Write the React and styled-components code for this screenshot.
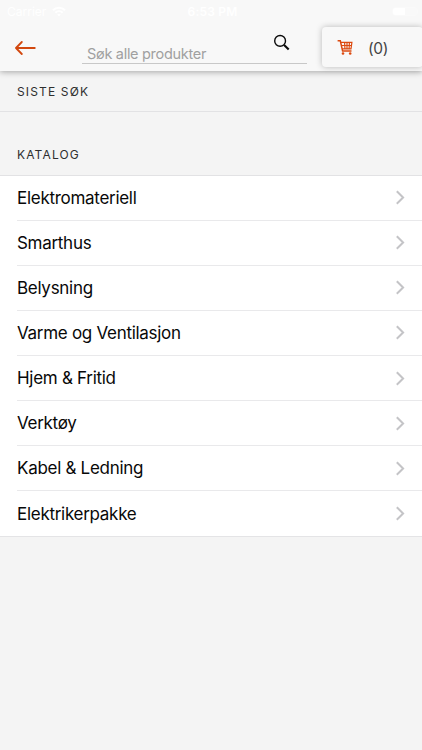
import React from 'react'
import styled, { createGlobalStyle } from 'styled-components';


const categories = [
  'Elektromateriell',
  'Smarthus',
  'Belysning',
  'Varme og Ventilasjon',
  'Hjem & Fritid',
  'Verktøy',
  'Kabel & Ledning',
  'Elektrikerpakke',
]


const App = () => {

  return (
    <>
    <GlobalStyle />
    <PageWrapper>
      <Header>
        <StatusBar>
          <Carrier>
            Carrier
            <svg width="14" height="11" viewBox="0 0 14 11" fill="none" stroke="#fff" strokeWidth="2">
              <path d="M1 4.2a8.6 8.6 0 0 1 12 0M3.3 6.8a5.3 5.3 0 0 1 7.4 0" />
              <path d="M5.2 8.6a2.6 2.6 0 0 1 3.6 0L7 10.4z" fill="#fff" stroke="none" />
            </svg>
          </Carrier>
          <Clock>6:53 PM</Clock>
          <BatteryWrapper>
            <Battery />
          </BatteryWrapper>
        </StatusBar>

        <Toolbar>
          <BackButton aria-label="Tilbake">
            <svg width="22" height="14" viewBox="0 0 22 14" fill="none" stroke="#d2480f" strokeWidth="1.8" strokeLinecap="round" strokeLinejoin="round">
              <path d="M6.8 1L1 7l5.8 6M1.2 7H19.8" />
            </svg>
          </BackButton>

          <SearchBox>
            <SearchInput placeholder="Søk alle produkter" />
            <svg width="17" height="17" viewBox="0 0 17 17" fill="none" stroke="#0a0a0a">
              <circle cx="6.1" cy="6.9" r="5.4" strokeWidth="1.4" />
              <path d="M10.1 10.9L14.7 15.4" strokeWidth="2.1" />
            </svg>
          </SearchBox>

          <CartButton>
            <svg width="17" height="16" viewBox="0 0 17 16" fill="none" stroke="#dc4a10">
              <path d="M0.6 1.8h2.7l2.3 10.1h8.9" strokeWidth="1.5" />
              <path d="M3.6 3.4h11.3l-0.9 6.4H5.1M4.4 6.5h10.1M7.6 3.5l0.3 6M10 3.5v6M12.4 3.5l-0.3 6" strokeWidth="1.2" />
              <circle cx="6" cy="14.5" r="1.3" fill="#dc4a10" stroke="none" />
              <circle cx="13.2" cy="14.5" r="1.3" fill="#dc4a10" stroke="none" />
            </svg>
            <span>(0)</span>
          </CartButton>
        </Toolbar>
      </Header>

      <SectionTitle $height="41px" $bottom="12px">SISTE SØK</SectionTitle>
      <SectionTitle $height="63.5px" $bottom="13px">KATALOG</SectionTitle>

      <CategoryList>
        {
          categories.map((name)=>(
            <CategoryRow key={name}>
              <span>{name}</span>
              <svg width="9" height="15" viewBox="0 0 9 15" fill="none" stroke="#c4c4c7" strokeWidth="2">
                <path d="M0.8 1.2l6.3 6.3-6.3 6.3" />
              </svg>
            </CategoryRow>
          ))
        }
      </CategoryList>
    </PageWrapper>
    </>
  )
}


const GlobalStyle = createGlobalStyle`
  * {
    box-sizing: border-box;
  }

  body {
    margin: 0;
    background-color: #f4f4f4;
    font-family: Inter, sans-serif;
  }
`

const PageWrapper = styled.div`
  width: 100%;
  height: 750px;
  overflow: hidden;
  background-color: #f4f4f4;
`

const Header = styled.header`
  position: relative;
  height: 71px;
  background-color: #f8f8f8;
  box-shadow: 0 1px 6px rgba(0, 0, 0, 0.33);
`

const StatusBar = styled.div`
  display: grid;
  grid-template-columns: 1fr auto 1fr;
  align-items: center;
  height: 22px;
  padding: 0 4px 0 7px;
  color: #fff;
  font-size: 12px;
`

const Carrier = styled.div`
  display: flex;
  align-items: center;
  gap: 6px;
`

const Clock = styled.div`
  font-weight: 600;
  letter-spacing: 0.2px;
`

const BatteryWrapper = styled.div`
  display: flex;
  justify-content: flex-end;
`

const Battery = styled.div`
  width: 26px;
  height: 9px;
  border: 1px solid #fafafa;
  border-radius: 3px;
  background: linear-gradient(to right, #fff 50%, #f9f9f9 50%);
`

const Toolbar = styled.div`
  display: flex;
  align-items: flex-start;
  padding-top: 5px;
`

const BackButton = styled.button`
  display: flex;
  align-items: center;
  flex-shrink: 0;
  width: 82px;
  height: 41px;
  padding: 0 0 0 15px;
  border: none;
  background: none;
`

const SearchBox = styled.div`
  display: flex;
  flex-shrink: 0;
  width: 225px;
  height: 37px;
  padding: 7px 16px 0 5px;
  border-bottom: 1px solid #c8c8c8;
`

const SearchInput = styled.input`
  flex: 1;
  min-width: 0;
  height: 22px;
  margin-top: 8px;
  padding: 0;
  border: none;
  outline: none;
  background: none;
  font-family: inherit;
  font-size: 14.5px;
  letter-spacing: -0.3px;

  &::placeholder {
    color: #a0a0a0;
    opacity: 1;
  }
`

const CartButton = styled.div`
  display: flex;
  align-items: center;
  gap: 14px;
  flex-shrink: 0;
  width: 101px;
  height: 40px;
  margin-left: 15px;
  padding-left: 15px;
  border-radius: 4px;
  background-color: #f8f8f8;
  box-shadow: 0 0 6px rgba(0, 0, 0, 0.25);
  color: #444;
  font-size: 15.5px;
  letter-spacing: -0.3px;

  & span{
    padding-top: 2px;
  }
`

const SectionTitle = styled.h2`
  display: flex;
  align-items: flex-end;
  height: ${(props)=> props.$height};
  margin: 0;
  padding: 0 17px ${(props)=> props.$bottom};
  border-bottom: 1px solid #e2e2e4;
  color: #2e2e2e;
  font-size: 12px;
  font-weight: 400;
  line-height: 14px;
  letter-spacing: 1.15px;
`

const CategoryList = styled.div`
  background-color: #fff;
  border-bottom: 1px solid #e4e4e6;
`

const CategoryRow = styled.div`
  display: flex;
  align-items: center;
  justify-content: space-between;
  height: 45.14px;
  margin-left: 17px;
  padding-right: 17px;
  border-bottom: 1px solid #e9e9eb;
  color: #080808;
  font-size: 17px;
  letter-spacing: -0.29px;

  &:last-child {
    height: 44.5px;
    border-bottom: none;
  }
`


export default App;
